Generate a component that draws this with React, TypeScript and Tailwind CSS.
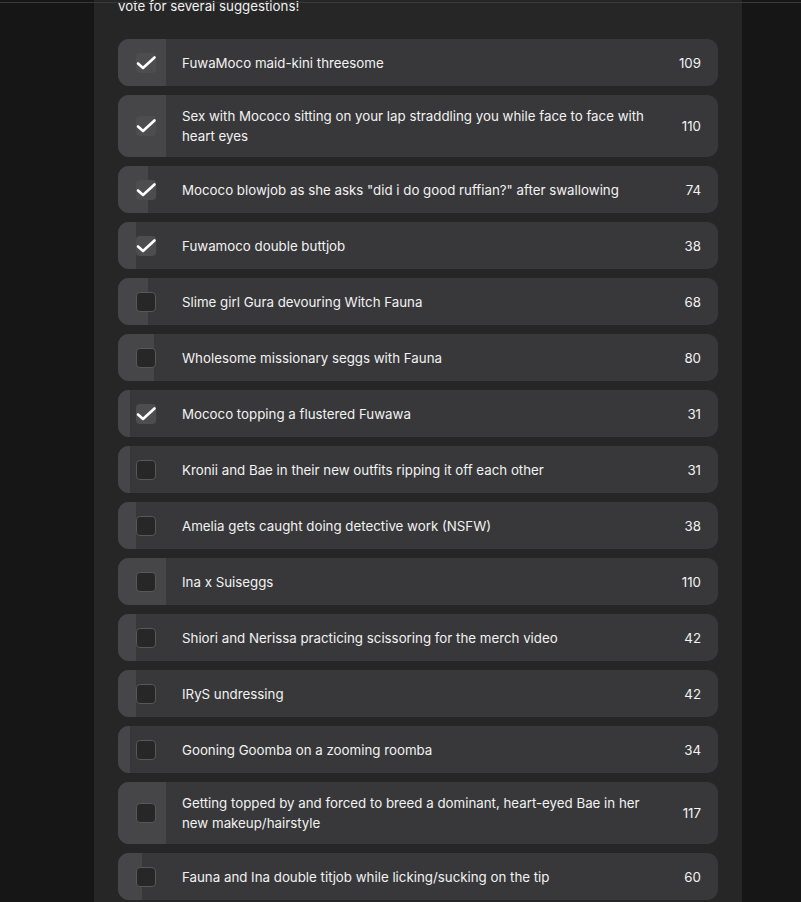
const TOTAL = 1400

const options = [
  { text: 'FuwaMoco maid-kini threesome', votes: 109, checked: true },
  { text: 'Sex with Mococo sitting on your lap straddling you while face to face with heart eyes', votes: 110, checked: true },
  { text: 'Mococo blowjob as she asks "did i do good ruffian?" after swallowing', votes: 74, checked: true },
  { text: 'Fuwamoco double buttjob', votes: 38, checked: true },
  { text: 'Slime girl Gura devouring Witch Fauna', votes: 68, checked: false },
  { text: 'Wholesome missionary seggs with Fauna', votes: 80, checked: false },
  { text: 'Mococo topping a flustered Fuwawa', votes: 31, checked: true },
  { text: 'Kronii and Bae in their new outfits ripping it off each other', votes: 31, checked: false },
  { text: 'Amelia gets caught doing detective work (NSFW)', votes: 38, checked: false },
  { text: 'Ina x Suiseggs', votes: 110, checked: false },
  { text: 'Shiori and Nerissa practicing scissoring for the merch video', votes: 42, checked: false },
  { text: 'IRyS undressing', votes: 42, checked: false },
  { text: 'Gooning Goomba on a zooming roomba', votes: 34, checked: false },
  { text: 'Getting topped by and forced to breed a dominant, heart-eyed Bae in her new makeup/hairstyle', votes: 117, checked: false },
  { text: 'Fauna and Ina double titjob while licking/sucking on the tip', votes: 60, checked: false },
]

function CheckMark() {
  return (
    <svg width="20" height="20" viewBox="0 0 20 20" className="overflow-visible">
      <polyline
        points="2,10.5 7,15 18.5,4.5"
        fill="none"
        stroke="white"
        strokeWidth="2.6"
        strokeLinecap="round"
        strokeLinejoin="round"
      />
    </svg>
  )
}

export default function App() {
  return (
    <div className="relative min-h-screen h-[902px] overflow-hidden bg-[#161616] font-['Inter','Liberation_Sans',sans-serif] text-[#f2f2f2]">
      {/* thin header border lying over the page */}
      <div className="absolute top-[2px] left-0 right-0 h-px bg-[#3a3a3a] z-10"></div>

      <div className="ml-[94px] w-[648px] h-full bg-[#262626] px-[24px] overflow-hidden">
        <p className="mt-[-4px] text-[13.3px] leading-5">vote for several suggestions!</p>

        <div className="mt-[23px] flex flex-col gap-[9px]">
          {options.map((o, i) => {
            const pct = Math.round((o.votes / TOTAL) * 100)
            return (
              <div
                key={i}
                className="relative flex items-center min-h-[47px] py-[11px] pl-[64px] pr-[17px] rounded-[11px] bg-[#38383a] overflow-hidden"
              >
                <div
                  className="absolute left-0 top-0 bottom-0 bg-[#464648]"
                  style={{ width: `${pct}%` }}
                ></div>
                <div
                  className={
                    o.checked
                      ? 'absolute left-[18px] top-1/2 -translate-y-1/2 w-5 h-5 rounded-[4px] bg-[#4d4d4f]'
                      : 'absolute left-[18px] top-1/2 -translate-y-1/2 w-5 h-5 rounded-[4px] bg-[#272727] border border-[#575757]'
                  }
                >
                  {o.checked && <CheckMark />}
                </div>
                <span className="relative flex-1 text-[13.3px] leading-5 pr-[18px]">{o.text}</span>
                <span className="relative text-[13.3px] leading-5 w-[24px] text-right">{o.votes}</span>
              </div>
            )
          })}
        </div>
      </div>
    </div>
  )
}
